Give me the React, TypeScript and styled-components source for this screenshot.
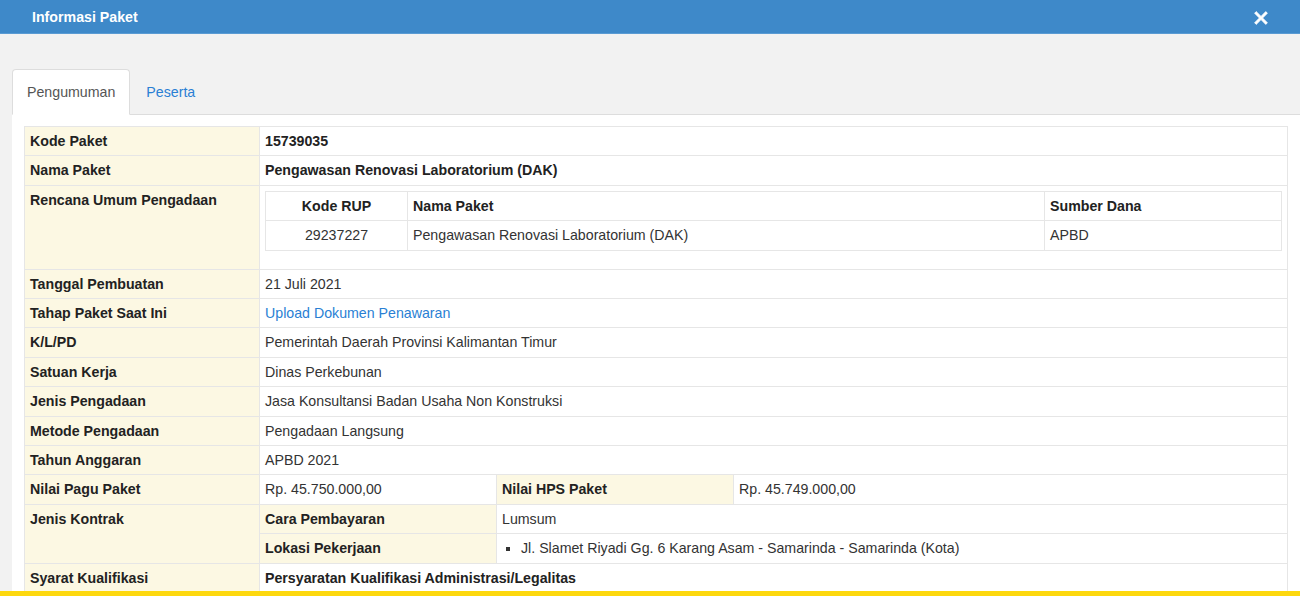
import React from 'react';
import styled, { createGlobalStyle } from 'styled-components';

const GlobalStyle = createGlobalStyle`
  html, body {
    margin: 0;
    padding: 0;
    background: #f2f2f2;
    font-family: "Liberation Sans", Arial, sans-serif;
    font-size: 14.2px;
    color: #333;
  }
`;

const Page = styled.div`
  height: 596px;
  display: flex;
  flex-direction: column;
  overflow: hidden;
  background: #f2f2f2;
`;

const Header = styled.div`
  height: 34px;
  flex: none;
  background: #3e89c9;
  border-bottom: 1px solid #5a9bd3;
  box-sizing: border-box;
  display: flex;
  align-items: center;
  justify-content: space-between;
  padding: 0 32px 0 32px;
  color: #fff;
`;

const Title = styled.div`
  font-weight: bold;
  font-size: 14.2px;
`;

const Close = styled.span`
  display: flex;
  width: 14px;
  height: 14px;
  margin-top: 2px;
`;

const Body = styled.div`
  flex: 1;
  overflow: hidden;
  padding: 35px 0 0 12px;
`;

const Tabs = styled.div`
  display: flex;
  height: 46px;
  align-items: stretch;
  border-bottom: 1px solid #ddd;
  box-sizing: border-box;
`;

const Tab = styled.div<{ $active?: boolean }>`
  display: flex;
  align-items: center;
  padding: 0 14px 0 14px;
  margin-right: 1px;
  margin-bottom: -1px;
  border: 1px solid ${p => (p.$active ? '#ddd' : 'transparent')};
  border-bottom-color: ${p => (p.$active ? '#fff' : 'transparent')};
  border-radius: 4px 4px 0 0;
  background: ${p => (p.$active ? '#fff' : 'transparent')};
  color: ${p => (p.$active ? '#555' : '#2a7fd4')};
`;

const Panel = styled.div`
  background: #fff;
  padding: 11px 12px 12px 12px;
  height: 100%;
`;

const InfoTable = styled.table`
  width: 100%;
  border-collapse: collapse;
  table-layout: fixed;
  border: 1px solid #ddd;
`;

const Label = styled.th`
  background: #fcf8e3;
  font-weight: bold;
  text-align: left;
  vertical-align: top;
  padding: 5px;
  line-height: 18.4px;
  border: 1px solid #e6e6e6;
  color: #222;
`;

const Cell = styled.td<{ $bold?: boolean }>`
  padding: 5px;
  line-height: 18.4px;
  vertical-align: top;
  border: 1px solid #e6e6e6;
  font-weight: ${p => (p.$bold ? 'bold' : 'normal')};
  color: ${p => (p.$bold ? '#222' : '#333')};
`;

const Link = styled.a`
  color: #2a7fd4;
  text-decoration: none;
`;

const RupTable = styled.table`
  width: 100%;
  border-collapse: collapse;
  table-layout: fixed;
  margin-bottom: 13px;
  border: 1px solid #ddd;
`;

const RupHead = styled.th<{ $center?: boolean }>`
  padding: 5px;
  line-height: 18.4px;
  text-align: ${p => (p.$center ? 'center' : 'left')};
  border: 1px solid #e6e6e6;
  color: #222;
`;

const RupCell = styled.td<{ $center?: boolean }>`
  padding: 5px;
  line-height: 18.4px;
  text-align: ${p => (p.$center ? 'center' : 'left')};
  border: 1px solid #e6e6e6;
`;

const SubHeading = styled.div`
  font-weight: bold;
  color: #222;
  margin-bottom: 4px;
`;

const Bullets = styled.ul`
  margin: 0;
  padding-left: 19px;
  list-style-type: square;
`;

const YellowBar = styled.div`
  height: 5px;
  flex: none;
  background: #fdd80e;
`;

const CloseIcon = () => (
  <svg viewBox="0 0 14 14" width="14" height="14">
    <path
      d="M2.2 0.6 L7 5.4 L11.8 0.6 L13.4 2.2 L8.6 7 L13.4 11.8 L11.8 13.4 L7 8.6 L2.2 13.4 L0.6 11.8 L5.4 7 L0.6 2.2 Z"
      fill="#fff"
      stroke="#fff"
      strokeWidth="0.8"
      strokeLinejoin="round"
    />
  </svg>
);

const simpleRows: [string, React.ReactNode][] = [
  ['Tanggal Pembuatan', '21 Juli 2021'],
  ['Tahap Paket Saat Ini', <Link href="#">Upload Dokumen Penawaran</Link>],
  ['K/L/PD', 'Pemerintah Daerah Provinsi Kalimantan Timur'],
  ['Satuan Kerja', 'Dinas Perkebunan'],
  ['Jenis Pengadaan', 'Jasa Konsultansi Badan Usaha Non Konstruksi'],
  ['Metode Pengadaan', 'Pengadaan Langsung'],
  ['Tahun Anggaran', 'APBD 2021'],
];

export default function App() {
  return (
    <Page>
      <GlobalStyle />
      <Header>
        <Title>Informasi Paket</Title>
        <Close>
          <CloseIcon />
        </Close>
      </Header>
      <Body>
        <Tabs>
          <Tab $active>Pengumuman</Tab>
          <Tab>Peserta</Tab>
        </Tabs>
        <Panel>
          <InfoTable>
            <colgroup>
              <col style={{ width: 235 }} />
              <col style={{ width: 237 }} />
              <col style={{ width: 237 }} />
              <col />
            </colgroup>
            <tbody>
              <tr>
                <Label>Kode Paket</Label>
                <Cell $bold colSpan={3}>15739035</Cell>
              </tr>
              <tr>
                <Label>Nama Paket</Label>
                <Cell $bold colSpan={3}>Pengawasan Renovasi Laboratorium (DAK)</Cell>
              </tr>
              <tr>
                <Label>Rencana Umum Pengadaan</Label>
                <Cell colSpan={3}>
                  <RupTable>
                    <colgroup>
                      <col style={{ width: 142 }} />
                      <col />
                      <col style={{ width: 237 }} />
                    </colgroup>
                    <thead>
                      <tr>
                        <RupHead $center>Kode RUP</RupHead>
                        <RupHead>Nama Paket</RupHead>
                        <RupHead>Sumber Dana</RupHead>
                      </tr>
                    </thead>
                    <tbody>
                      <tr>
                        <RupCell $center>29237227</RupCell>
                        <RupCell>Pengawasan Renovasi Laboratorium (DAK)</RupCell>
                        <RupCell>APBD</RupCell>
                      </tr>
                    </tbody>
                  </RupTable>
                </Cell>
              </tr>
              {simpleRows.map(([label, value]) => (
                <tr key={label}>
                  <Label>{label}</Label>
                  <Cell colSpan={3}>{value}</Cell>
                </tr>
              ))}
              <tr>
                <Label>Nilai Pagu Paket</Label>
                <Cell>Rp. 45.750.000,00</Cell>
                <Label>Nilai HPS Paket</Label>
                <Cell>Rp. 45.749.000,00</Cell>
              </tr>
              <tr>
                <Label rowSpan={2}>Jenis Kontrak</Label>
                <Label>Cara Pembayaran</Label>
                <Cell colSpan={2}>Lumsum</Cell>
              </tr>
              <tr>
                <Label>Lokasi Pekerjaan</Label>
                <Cell colSpan={2}>
                  <Bullets>
                    <li>Jl. Slamet Riyadi Gg. 6 Karang Asam - Samarinda - Samarinda (Kota)</li>
                  </Bullets>
                </Cell>
              </tr>
              <tr>
                <Label>Syarat Kualifikasi</Label>
                <Cell colSpan={3}>
                  <SubHeading>Persyaratan Kualifikasi Administrasi/Legalitas</SubHeading>
                  <RupTable>
                    <tbody>
                      <tr>
                        <RupCell>&nbsp;</RupCell>
                      </tr>
                    </tbody>
                  </RupTable>
                </Cell>
              </tr>
            </tbody>
          </InfoTable>
        </Panel>
      </Body>
      <YellowBar />
    </Page>
  );
}
